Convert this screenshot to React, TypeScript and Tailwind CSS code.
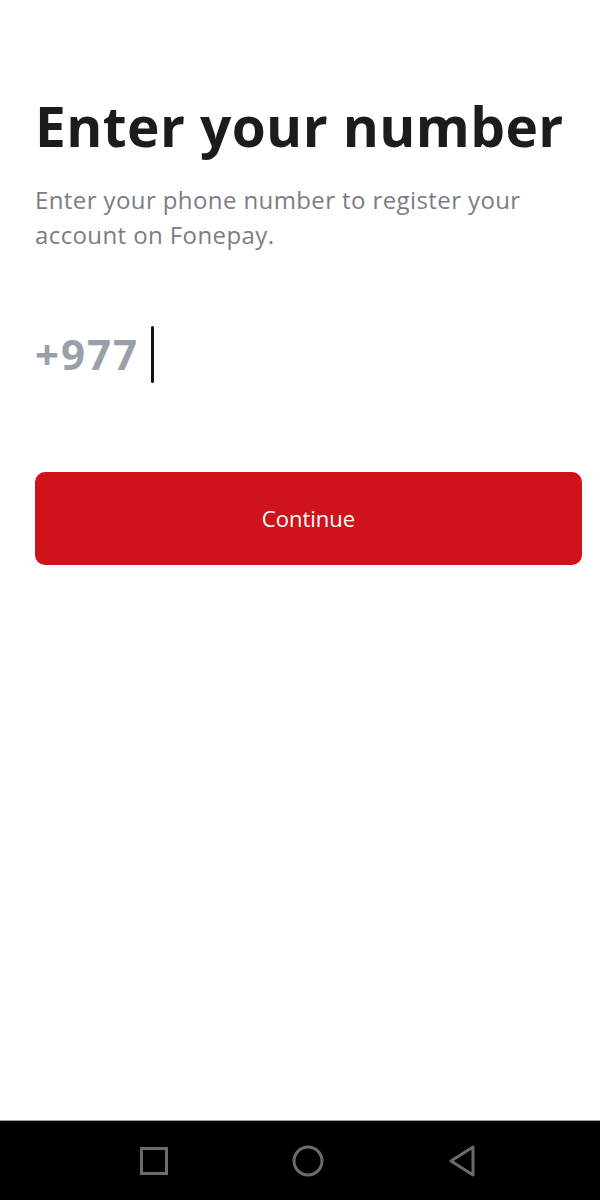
export default function App() {
  return (
    <div className="flex flex-col w-[600px] h-[1200px] bg-white font-['Open_Sans',sans-serif]">
      <main className="flex-1 flex flex-col pl-[35px] pr-[18px] pt-[90px]">
        <h1 className="text-[55px] leading-[72px] font-bold text-[#1c1c1c] tracking-[0.4px]">
          Enter your number
        </h1>
        <p className="mt-[20px] max-w-[500px] text-[24px] leading-[35px] text-[#7a7d85] tracking-[0.4px]">
          Enter your phone number to register your account on Fonepay.
        </p>
        <div className="mt-[73px] flex items-center h-[58px]">
          <span className="text-[42px] font-bold text-[#9aa0ab] leading-none tracking-[2px]">+977</span>
          <span className="ml-[12px] w-[3px] h-[57px] bg-[#111] rounded-full" />
        </div>
        <button className="mt-[89px] h-[93px] w-full rounded-[10px] bg-[#d0121a] text-white text-[22px]">
          Continue
        </button>
      </main>
      <nav className="h-[80px] bg-black border-t border-[#9a9a9a] flex items-center pl-[140px] gap-[124px]">
        <svg width="28" height="28" viewBox="0 0 28 28">
          <rect x="1.5" y="1.5" width="25" height="25" fill="none" stroke="#6b6b6b" strokeWidth="3" />
        </svg>
        <svg width="32" height="32" viewBox="0 0 32 32">
          <circle cx="16" cy="16" r="14" fill="none" stroke="#6b6b6b" strokeWidth="3" />
        </svg>
        <svg width="28" height="32" viewBox="0 0 28 32">
          <path d="M25 2 L3 16 L25 30 Z" fill="none" stroke="#6b6b6b" strokeWidth="3" strokeLinejoin="round" />
        </svg>
      </nav>
    </div>
  );
}
